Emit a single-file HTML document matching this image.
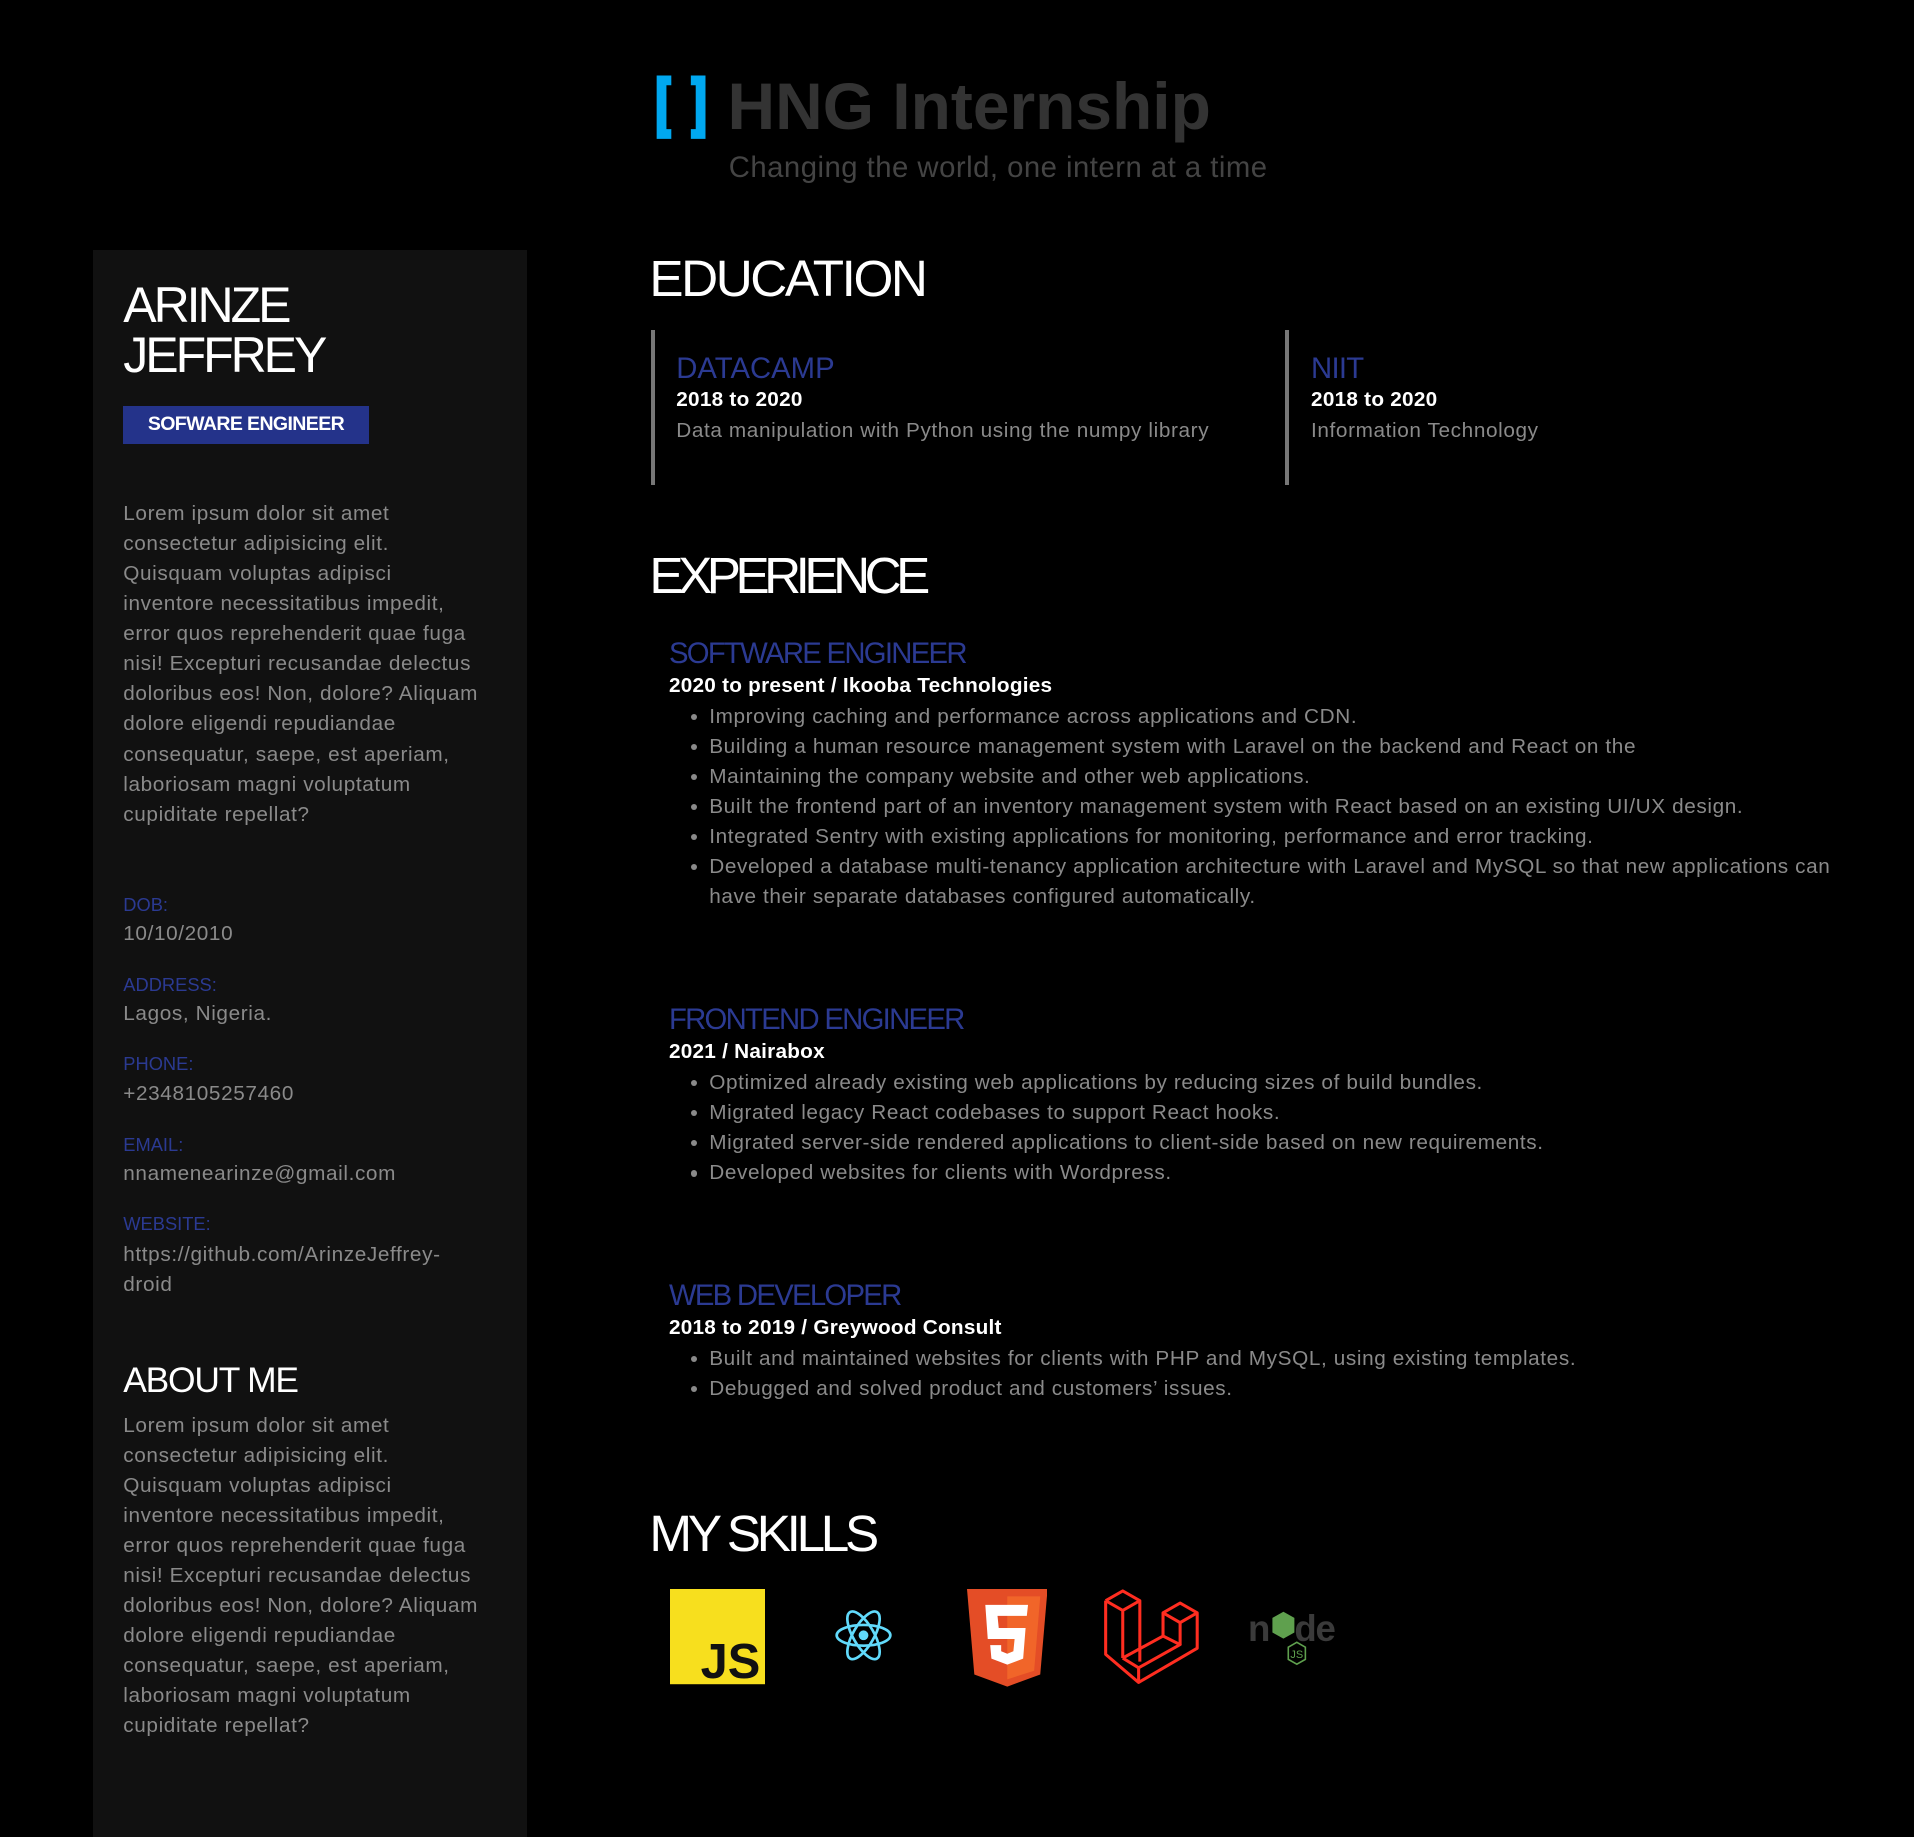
<!DOCTYPE html>
<html><head><meta charset="utf-8"><style>
html,body{margin:0;padding:0;background:#000;}
body{width:1568px;height:1500px;zoom:1.2207;position:relative;overflow:hidden;font-family:"Liberation Sans",sans-serif;}
.a{position:absolute;white-space:nowrap;}
.g{color:#8a8a8a;font-size:17px;letter-spacing:0.5px;}
.w{color:#fff;}
.side{position:absolute;left:76px;top:205px;width:356px;height:1300px;background:#111;}
.lorem{position:absolute;left:101px;width:294px;font-size:17px;line-height:24.6px;color:#8a8a8a;white-space:normal;letter-spacing:0.5px;}
.lbl{font-size:15px;color:#2b3a92;}
.h2{font-size:42px;color:#fff;letter-spacing:-1.5px;}
.card{position:absolute;border-left:4px solid #777;height:127px;top:270px;}
.t{font-size:24px;color:#2b3a92;letter-spacing:-0.6px;}
.b{font-size:17px;font-weight:bold;color:#fff;letter-spacing:0.2px;}
ul{position:absolute;margin:0;padding:0 0 0 33px;list-style:none;font-size:17px;line-height:24.6px;color:#8a8a8a;letter-spacing:0.5px;}
li{position:relative;}
li:before{content:"";position:absolute;left:-15px;top:10px;width:5px;height:5px;border-radius:50%;background:#8a8a8a;}
</style></head><body>
<svg class="a" style="left:535px;top:60px" width="46" height="56"><path d="M3 2H15V10H11V46H15V54H3Z M43 2H31V10H35V46H31V54H43Z" fill="#00a8f0"/></svg>
<div class="a" style="left:596px;top:56px;font-size:54px;font-weight:bold;color:#333">HNG Internship</div>
<div class="a" style="left:597px;top:124px;font-size:24px;color:#444;letter-spacing:0.4px">Changing the world, one intern at a time</div>

<div class="side"></div>
<div class="a w" style="left:101px;top:229px;font-size:41px;line-height:41px;letter-spacing:-2.5px">ARINZE<br>JEFFREY</div>
<div class="a" style="left:101px;top:333px;width:201px;height:31px;background:#24338a;color:#fff;font-size:16px;font-weight:bold;line-height:31px;text-align:center;letter-spacing:-0.5px">SOFWARE ENGINEER</div>
<div class="lorem" style="top:409px">Lorem ipsum dolor sit amet consectetur adipisicing elit. Quisquam voluptas adipisci inventore necessitatibus impedit, error quos reprehenderit quae fuga nisi! Excepturi recusandae delectus doloribus eos! Non, dolore? Aliquam dolore eligendi repudiandae consequatur, saepe, est aperiam, laboriosam magni voluptatum cupiditate repellat?</div>
<div class="a lbl" style="left:101px;top:732px">DOB:</div><div class="a g" style="left:101px;top:755px">10/10/2010</div>
<div class="a lbl" style="left:101px;top:798px">ADDRESS:</div><div class="a g" style="left:101px;top:821px">Lagos, Nigeria.</div>
<div class="a lbl" style="left:101px;top:863px">PHONE:</div><div class="a g" style="left:101px;top:886px">+2348105257460</div>
<div class="a lbl" style="left:101px;top:929px">EMAIL:</div><div class="a g" style="left:101px;top:952px">nnamenearinze@gmail.com</div>
<div class="a lbl" style="left:101px;top:994px">WEBSITE:</div><div class="lorem" style="top:1016px">https://github.com/ArinzeJeffrey-<br>droid</div>
<div class="a w" style="left:101px;top:1114px;font-size:29px;letter-spacing:-1px">ABOUT ME</div>
<div class="lorem" style="top:1156px">Lorem ipsum dolor sit amet consectetur adipisicing elit. Quisquam voluptas adipisci inventore necessitatibus impedit, error quos reprehenderit quae fuga nisi! Excepturi recusandae delectus doloribus eos! Non, dolore? Aliquam dolore eligendi repudiandae consequatur, saepe, est aperiam, laboriosam magni voluptatum cupiditate repellat?</div>

<div class="a h2" style="left:532px;top:204px;letter-spacing:-2px">EDUCATION</div>
<div class="card" style="left:533px"></div>
<div class="a t" style="left:554px;top:288px;letter-spacing:0">DATACAMP</div>
<div class="a b" style="left:554px;top:318px">2018 to 2020</div>
<div class="a g" style="left:554px;top:343px">Data manipulation with Python using the numpy library</div>
<div class="card" style="left:1053px"></div>
<div class="a t" style="left:1074px;top:288px">NIIT</div>
<div class="a b" style="left:1074px;top:318px">2018 to 2020</div>
<div class="a g" style="left:1074px;top:343px">Information Technology</div>

<div class="a h2" style="left:532px;top:447px;letter-spacing:-4.5px">EXPERIENCE</div>
<div class="a t" style="left:548px;top:522px;letter-spacing:-1.4px">SOFTWARE ENGINEER</div>
<div class="a b" style="left:548px;top:552px">2020 to present / Ikooba Technologies</div>
<ul style="left:548px;top:575px;width:945px">
<li>Improving caching and performance across applications and CDN.</li>
<li>Building a human resource management system with Laravel on the backend and React on the</li>
<li>Maintaining the company website and other web applications.</li>
<li>Built the frontend part of an inventory management system with React based on an existing UI/UX design.</li>
<li>Integrated Sentry with existing applications for monitoring, performance and error tracking.</li>
<li>Developed a database multi-tenancy application architecture with Laravel and MySQL so that new applications can have their separate databases configured automatically.</li>
</ul>
<div class="a t" style="left:548px;top:822px;letter-spacing:-1.4px">FRONTEND ENGINEER</div>
<div class="a b" style="left:548px;top:852px">2021 / Nairabox</div>
<ul style="left:548px;top:875px;width:945px">
<li>Optimized already existing web applications by reducing sizes of build bundles.</li>
<li>Migrated legacy React codebases to support React hooks.</li>
<li>Migrated server-side rendered applications to client-side based on new requirements.</li>
<li>Developed websites for clients with Wordpress.</li>
</ul>
<div class="a t" style="left:548px;top:1048px;letter-spacing:-1.4px">WEB DEVELOPER</div>
<div class="a b" style="left:548px;top:1078px">2018 to 2019 / Greywood Consult</div>
<ul style="left:548px;top:1101px;width:945px">
<li>Built and maintained websites for clients with PHP and MySQL, using existing templates.</li>
<li>Debugged and solved product and customers’ issues.</li>
</ul>

<div class="a h2" style="left:532px;top:1232px;letter-spacing:-3.5px">MY SKILLS</div>
<svg class="a" style="left:549px;top:1302px" width="78" height="78"><rect width="78" height="78" fill="#f7df1e"/><text x="74" y="73" text-anchor="end" font-family="Liberation Sans" font-weight="bold" font-size="40" fill="#111">JS</text></svg>
<svg class="a" style="left:682px;top:1316px" width="50" height="48" viewBox="-25 -24 50 48"><g fill="none" stroke="#61dafb" stroke-width="2.2"><ellipse rx="22" ry="8.5"/><ellipse rx="22" ry="8.5" transform="rotate(60)"/><ellipse rx="22" ry="8.5" transform="rotate(120)"/></g><circle r="4" fill="#61dafb"/></svg>
<svg class="a" style="left:792px;top:1302px" width="66" height="82" viewBox="0 0 66 82"><path d="M0 0H66L60 70 33 80 6 70Z" fill="#e44d26"/><path d="M33 6V74L55 67 60 6Z" fill="#f16529"/><path d="M15 13H50L49 22H25L26 32H48L46 57 33 62 20 57 19 46H28L28 51 33 53 38 51 39 41H17Z" fill="#fff"/></svg>
<svg class="a" style="left:903px;top:1299px" width="80" height="82" viewBox="0 0 80 82"><g fill="none" stroke="#ff2d20" stroke-width="2.5" stroke-linejoin="round"><path d="M3 12L17 4 31 12V62"/><path d="M3 12V56L30 79 78 51V22L64 14 50 22V41L17 59"/><path d="M3 12L17 20 31 12M17 20V59"/><path d="M50 22L64 30 78 22M64 30V48"/><path d="M17 59L30 67 64 48 50 41"/><path d="M30 67V79"/></g></svg>
<svg class="a" style="left:1022px;top:1312px" width="82" height="56" viewBox="0 0 82 56"><text x="0" y="32" font-family="Liberation Sans" font-weight="bold" font-size="30" fill="#3a3a3a">n</text><path d="M20 13L29 8 38 13V25L29 30 20 25Z" fill="#5fa04e"/><text x="38" y="32" font-family="Liberation Sans" font-weight="bold" font-size="30" fill="#3a3a3a" letter-spacing="-1">de</text><path d="M33 37L40 33 47 37V47L40 51 33 47Z" fill="none" stroke="#5fa04e" stroke-width="1.3"/><text x="40" y="46" text-anchor="middle" font-family="Liberation Sans" font-size="9" fill="#5fa04e">JS</text></svg>
</body></html>
